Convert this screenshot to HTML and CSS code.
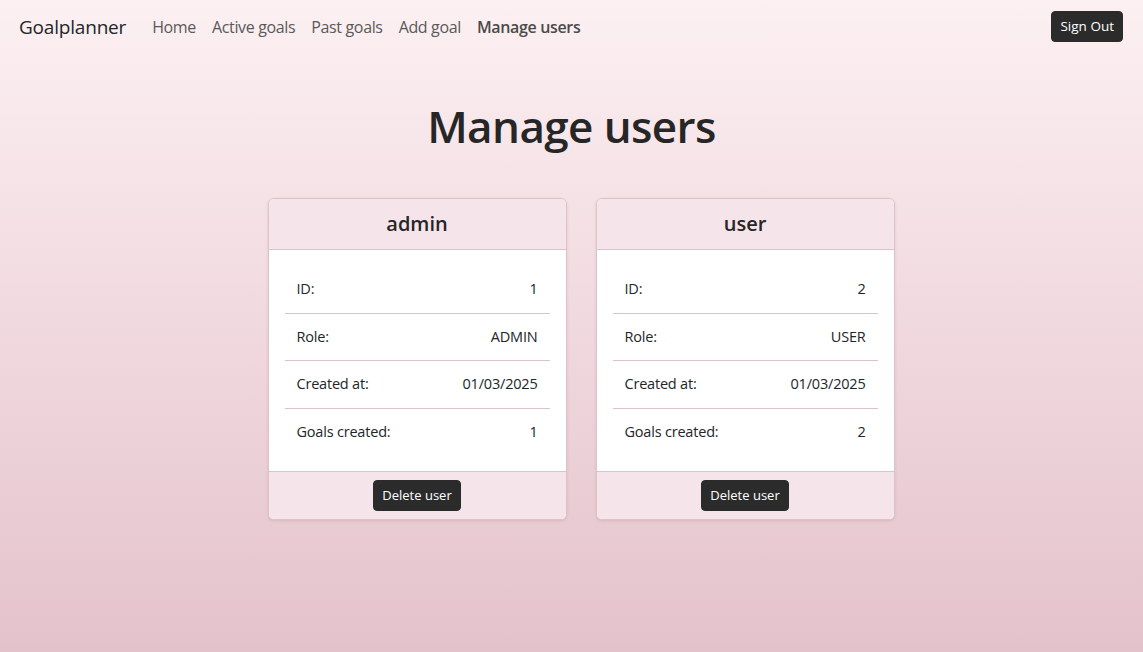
FILE: index.html
```html
<!DOCTYPE html>
<html lang="en">
<head>
<meta charset="utf-8">
<title>Goalplanner - Manage users</title>
<link rel="stylesheet" href="styles.css">
</head>
<body>
<nav class="navbar">
  <a class="brand" href="#">Goalplanner</a>
  <ul class="nav">
    <li><a class="nav-link" href="#">Home</a></li>
    <li><a class="nav-link" href="#">Active goals</a></li>
    <li><a class="nav-link" href="#">Past goals</a></li>
    <li><a class="nav-link" href="#">Add goal</a></li>
    <li><a class="nav-link active" href="#">Manage users</a></li>
  </ul>
  <button class="btn btn-dark">Sign Out</button>
</nav>
<main class="main">
  <h1 class="title">Manage users</h1>
  <div class="cards">
    <div class="card">
      <div class="card-header">admin</div>
      <div class="card-body">
        <ul class="list">
          <li class="row"><span>ID:</span><span>1</span></li>
          <li class="row"><span>Role:</span><span>ADMIN</span></li>
          <li class="row"><span>Created at:</span><span>01/03/2025</span></li>
          <li class="row"><span>Goals created:</span><span>1</span></li>
        </ul>
      </div>
      <div class="card-footer"><button class="btn btn-dark">Delete user</button></div>
    </div>
    <div class="card">
      <div class="card-header">user</div>
      <div class="card-body">
        <ul class="list">
          <li class="row"><span>ID:</span><span>2</span></li>
          <li class="row"><span>Role:</span><span>USER</span></li>
          <li class="row"><span>Created at:</span><span>01/03/2025</span></li>
          <li class="row"><span>Goals created:</span><span>2</span></li>
        </ul>
      </div>
      <div class="card-footer"><button class="btn btn-dark">Delete user</button></div>
    </div>
  </div>
</main>
</body>
</html>
```

FILE: styles.css
```css
* { box-sizing: border-box; }
html, body { margin: 0; padding: 0; }
body {
  min-height: 100vh;
  font-family: "Open Sans", "Noto Sans", sans-serif;
  color: #212529;
  background: linear-gradient(180deg, #fcf0f2 0%, #e4c2cb 100%);
  font-size: 15px;
}
.navbar {
  display: flex;
  align-items: center;
  height: 53px;
  padding: 0 20px 0 19px;
}
.brand {
  font-size: 19px;
  color: #212529;
  text-decoration: none;
  margin-right: 18px;
  letter-spacing: -0.2px;
}
.nav {
  display: flex;
  list-style: none;
  margin: 0;
  padding: 0;
  flex: 1;
}
.nav-link {
  display: block;
  padding: 8px 8px;
  font-size: 16px;
  line-height: 20px;
  color: #595959;
  text-decoration: none;
  letter-spacing: -0.35px;
}
.nav-link.active { font-weight: 600; color: #4a4a4a; }
.btn {
  font-family: inherit;
  font-size: 13.5px;
  line-height: 21px;
  padding: 4px 8px;
  border-radius: 4px;
  border: 1px solid #2b2b2b;
  cursor: pointer;
}
.card-footer .btn { font-size: 13px; }
.btn-dark { background: #2b2b2b; color: #fff; }
.main { display: flex; flex-direction: column; align-items: center; }
.title {
  margin: 42px 0 41px;
  font-size: 44px;
  line-height: 62px;
  font-weight: 600;
  letter-spacing: -0.6px;
  color: #262626;
}
.cards {
  display: flex;
  gap: 29px;
  padding-left: 19px;
}
.card {
  width: 299px;
  background: #fff;
  border: 1px solid #dcc3ca;
  border-radius: 6px;
  overflow: hidden;
  box-shadow: 0 1px 3px rgba(120, 60, 80, 0.15);
}
.card-header {
  background: #f5e4e9;
  border-bottom: 1px solid #dcc3ca;
  padding: 13px 16px;
  text-align: center;
  font-size: 20px;
  line-height: 24px;
  font-weight: 600;
  color: #262626;
}
.card-body { padding: 16px; }
.list { list-style: none; margin: 0; padding: 0; }
.row {
  display: flex;
  justify-content: space-between;
  padding: 12px 12px;
  line-height: 22.5px;
  font-size: 14.5px;
  border-bottom: 1px solid #dcc3ca;
  letter-spacing: -0.2px;
}
.row:last-child { border-bottom: 0; }
.card-footer {
  background: #f5e4e9;
  border-top: 1px solid #dcc3ca;
  padding: 8px 16px;
  text-align: center;
}
```
